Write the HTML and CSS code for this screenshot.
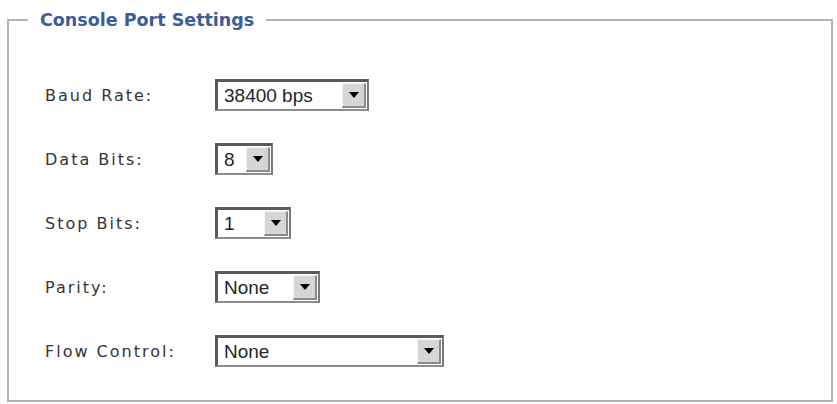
FILE: index.html
```html
<!DOCTYPE html>
<html>
<head>
<meta charset="utf-8">
<link rel="stylesheet" href="styles.css">
</head>
<body>
<div class="page">
  <fieldset class="panel">
    <legend class="panel-title">Console Port Settings</legend>
    <div class="form">
      <div class="label">Baud Rate:</div>
      <div class="select w-baud"><span class="value">38400 bps</span><span class="btn"><span class="arrow"></span></span></div>

      <div class="label">Data Bits:</div>
      <div class="select w-data"><span class="value">8</span><span class="btn"><span class="arrow"></span></span></div>

      <div class="label">Stop Bits:</div>
      <div class="select w-stop"><span class="value">1</span><span class="btn"><span class="arrow"></span></span></div>

      <div class="label">Parity:</div>
      <div class="select w-parity"><span class="value">None</span><span class="btn"><span class="arrow"></span></span></div>

      <div class="label">Flow Control:</div>
      <div class="select w-flow"><span class="value">None</span><span class="btn"><span class="arrow"></span></span></div>
    </div>
  </fieldset>
</div>
</body>
</html>
```

FILE: styles.css
```css
html, body {
  margin: 0;
  padding: 0;
  background: #ffffff;
}

.page {
  padding: 10px 4px 0 7px;
  width: 837px;
  height: 404px;
  box-sizing: border-box;
}

.panel {
  margin: 0;
  border: 2px solid #b4b4b4;
  padding: 0;
  min-width: 0;
  box-sizing: border-box;
  height: 392px;
}

.panel-title {
  margin-left: 19px;
  padding: 0 12px;
  font-family: "DejaVu Sans", Verdana, sans-serif;
  font-weight: bold;
  font-size: 17.5px;
  line-height: 20px;
  height: 20px;
  color: #3d5c9a;
}

.form {
  display: grid;
  grid-template-columns: 170px auto;
  grid-auto-rows: 32px;
  row-gap: 32px;
  align-items: center;
  justify-items: start;
  padding: 49px 0 0 36px;
}

.label {
  font-family: "DejaVu Sans", Verdana, sans-serif;
  font-size: 16px;
  letter-spacing: 2px;
  color: #353535;
}

.select {
  display: flex;
  align-items: stretch;
  height: 32px;
  box-sizing: border-box;
  border-style: solid;
  border-width: 3px 2px 2px 3px;
  border-color: #5a5a5a #7a7a7a #8c8c8c #5a5a5a;
  background: #ffffff;
  font-family: "Liberation Sans", Arial, sans-serif;
  font-size: 19px;
  color: #262626;
}

.value {
  flex: 1;
  padding-left: 6px;
  line-height: 27px;
  white-space: nowrap;
}

.btn {
  width: 24px;
  margin: 1px 1px 1px 0;
  box-sizing: border-box;
  background: #d6d6d6;
  border-style: solid;
  border-width: 1px 2px 2px 1px;
  border-color: #f4f4f4 #8a8a8a #8a8a8a #f4f4f4;
  display: flex;
  align-items: center;
  justify-content: center;
}

.arrow {
  width: 0;
  height: 0;
  border-left: 5px solid transparent;
  border-right: 5px solid transparent;
  border-top: 6px solid #000000;
}

.w-baud { width: 154px; }
.w-data { width: 58px; }
.w-stop { width: 76px; }
.w-parity { width: 105px; }
.w-flow { width: 229px; }
```
